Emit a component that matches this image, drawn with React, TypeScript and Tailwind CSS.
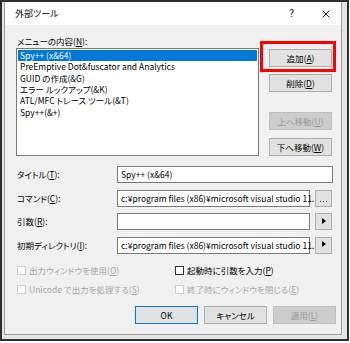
import type { ReactNode } from 'react'

const font = "font-['Noto_Sans_CJK_JP',sans-serif] [font-feature-settings:'palt']"

const tools = [
  'Spy++ (x&64)',
  'PreEmptive Dot&fuscator and Analytics',
  'GUID の作成(&G)',
  'エラー ルックアップ(&K)',
  'ATL/MFC トレース ツール(&T)',
  'Spy++(&+)',
]

const vsPath = 'c:¥program files (x86)¥microsoft visual studio 11.'

function Key({ k }: { k: string }) {
  return <span className="underline underline-offset-1">{k}</span>
}

function Btn({
  children,
  disabled,
  primary,
  className = '',
}: {
  children: ReactNode
  disabled?: boolean
  primary?: boolean
  className?: string
}) {
  return (
    <div
      className={`flex items-center justify-center border text-[8.5px] leading-none ${
        disabled
          ? 'bg-[#cccccc] border-[#bfbfbf] text-[#9a9a9a]'
          : primary
            ? 'bg-[#e1e1e1] border-[#0078d7] text-black'
            : 'bg-[#e1e1e1] border-[#adadad] text-black'
      } ${className}`}
    >
      {children}
    </div>
  )
}

function Field({
  label,
  value,
  side,
}: {
  label: ReactNode
  value?: string
  side?: 'dots' | 'arrow'
}) {
  return (
    <div className="flex items-center h-[17px]">
      <div className="w-[101px] pl-[1px] text-[8.5px] leading-none">{label}</div>
      <div
        className={`h-full bg-white border border-[#7a7a7a] flex items-center px-[3px] text-[8.5px] leading-none whitespace-nowrap ${
          side ? 'w-[193px]' : 'w-[216px]'
        }`}
      >
        {value}
      </div>
      {side && (
        <div className="ml-[5px] w-[17px] h-[17px] bg-[#e1e1e1] border border-[#adadad] flex items-end justify-center pb-[4px]">
          {side === 'dots' ? (
            <svg width="7" height="1" viewBox="0 0 7 1">
              <rect x="0" y="0" width="1" height="1" fill="#333" />
              <rect x="3" y="0" width="1" height="1" fill="#333" />
              <rect x="6" y="0" width="1" height="1" fill="#333" />
            </svg>
          ) : (
            <svg width="4" height="6" viewBox="0 0 4 6" className="mb-[1.5px]">
              <path d="M0 0 L4 3 L0 6 Z" fill="#000" />
            </svg>
          )}
        </div>
      )}
    </div>
  )
}

function Check({ label, disabled }: { label: ReactNode; disabled?: boolean }) {
  return (
    <div className={`flex items-center h-[14px] ${disabled ? 'text-[#a6a6a6]' : 'text-black'}`}>
      <div
        className={`w-[9px] h-[9px] border bg-white ${
          disabled ? 'border-[#cccccc]' : 'border-[#333333]'
        }`}
      />
      <span className="ml-[3px] text-[8.5px] leading-none">{label}</span>
    </div>
  )
}

export default function App() {
  return (
    <div className={`w-[350px] h-[343px] bg-white text-black ${font}`}>
      <div className="w-[349px] h-[341px] border-2 border-[#2e2e2e] bg-[#e4e4e4] pl-[2px] pr-[5px] pb-[4px] flex flex-col">
        <div className="flex-1 flex flex-col border-x border-b border-[#9c9c9c] bg-[#f0f0f0]">
          {/* title bar */}
          <div className="h-[23px] bg-white flex items-center pl-[10px] pr-[11px]">
            <span className="text-[9px] leading-none flex-1">外部ツール</span>
            <span className="text-[9.5px] leading-none mr-[28px]">?</span>
            <svg width="8" height="8" viewBox="0 0 8 8">
              <path d="M0.5 0.5 L7.5 7.5 M7.5 0.5 L0.5 7.5" stroke="#222" strokeWidth="1" />
            </svg>
          </div>

          <div className="relative flex-1 pl-[11px]">
            <div className="mt-[10px] h-[12px] flex items-center pl-[1px] text-[8.5px] leading-none">
              メニューの内容(<Key k="N" />):
            </div>

            <div className="mt-[1px] flex">
              <div className="w-[243px] h-[108px] bg-white border border-[#7a7a7a] pt-[1px] px-[1px]">
                {tools.map((t, i) => (
                  <div
                    key={t}
                    className={`h-[11.3px] flex items-center pl-[2px] text-[8.5px] leading-[11px] whitespace-nowrap ${
                      i === 0 ? 'bg-[#0078d7] text-white' : ''
                    }`}
                  >
                    {t}
                  </div>
                ))}
              </div>

              <div className="ml-[10px] flex flex-col w-[63px] pt-[1px]">
                <Btn className="h-[18px]">
                  追加(<Key k="A" />)
                </Btn>
                <Btn className="h-[17.5px] mt-[7px]">
                  削除(<Key k="D" />)
                </Btn>
                <Btn disabled className="h-[17.5px] mt-[20.5px]">
                  上へ移動(<Key k="U" />)
                </Btn>
                <Btn className="h-[17.5px] mt-[8.5px]">
                  下へ移動(<Key k="W" />)
                </Btn>
              </div>
            </div>

            <div className="mt-[10px] flex flex-col gap-[6.5px]">
              <Field
                label={
                  <>
                    タイトル(<Key k="T" />):
                  </>
                }
                value="Spy++ (x&64)"
              />
              <Field
                label={
                  <>
                    コマンド(<Key k="C" />):
                  </>
                }
                value={vsPath}
                side="dots"
              />
              <Field
                label={
                  <>
                    引数(<Key k="R" />):
                  </>
                }
                side="arrow"
              />
              <Field
                label={
                  <>
                    初期ディレクトリ(<Key k="I" />):
                  </>
                }
                value={vsPath}
                side="arrow"
              />
            </div>

            <div className="mt-[9.5px] pl-[1px] grid grid-cols-[158px_1fr] gap-y-[5.5px]">
              <Check
                disabled
                label={
                  <>
                    出力ウィンドウを使用(<Key k="O" />)
                  </>
                }
              />
              <Check
                label={
                  <>
                    起動時に引数を入力(<Key k="P" />)
                  </>
                }
              />
              <Check
                disabled
                label={
                  <>
                    Unicode で出力を処理する(<Key k="S" />)
                  </>
                }
              />
              <Check
                disabled
                label={
                  <>
                    終了時にウィンドウを閉じる(<Key k="E" />)
                  </>
                }
              />
            </div>

            <div className="mt-[9.5px] flex justify-end gap-[6px] pr-[5px]">
              <Btn primary className="w-[63px] h-[17.5px]">
                OK
              </Btn>
              <Btn className="w-[63px] h-[17.5px]">キャンセル</Btn>
              <Btn disabled className="w-[63px] h-[17.5px]">
                適用(<Key k="L" />)
              </Btn>
            </div>

            {/* red highlight around the add button */}
            <div className="absolute left-[255px] top-[16px] w-[76px] h-[31px] border-[3px] border-[#ff0000]" />
          </div>
        </div>
      </div>
    </div>
  )
}
